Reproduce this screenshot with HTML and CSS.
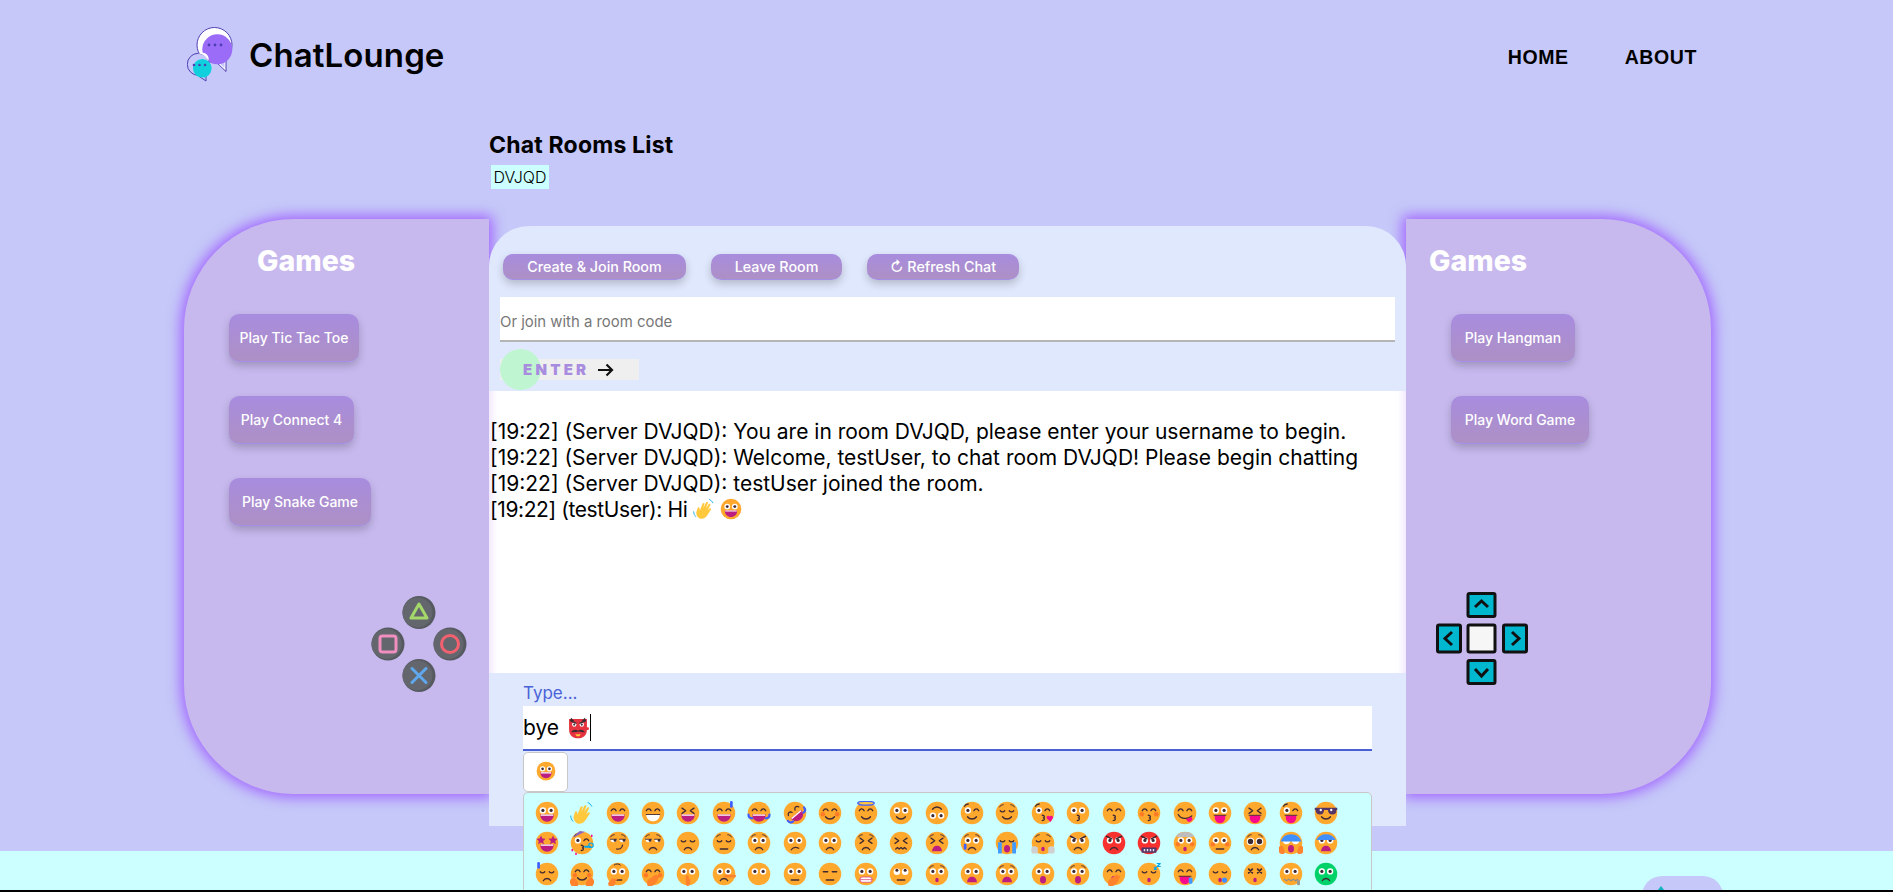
FILE: index.html
```html
<!DOCTYPE html>
<html lang="en">
<head>
  <meta charset="UTF-8">
  <meta name="viewport" content="width=device-width, initial-scale=1.0">
  <title>ChatLounge</title>
  <link rel="stylesheet" href="styles.css">
</head>
<body>
  <header class="site-header">
    <a class="brand" href="#">
      <svg class="brand-logo" viewBox="0 0 46 56" width="46" height="56">
        <path d="M28 34L39 44.500V28z" fill="#fff" stroke="#4f3fb5" stroke-width="1" stroke-linejoin="round"/>
        <circle cx="27.500" cy="18" r="17.500" fill="#fff" stroke="#4f3fb5" stroke-width="1"/>
        <path d="M32 36l5.500 5V33z" fill="#c5c8f8"/>
        <circle cx="30.300" cy="22.300" r="15" fill="#9b6cf7"/>
        <circle cx="22" cy="18" r="1.400" fill="#4f3fb5"/><circle cx="28" cy="18" r="1.400" fill="#4f3fb5"/><circle cx="34" cy="18" r="1.400" fill="#4f3fb5"/>
        <path d="M7 46l12 8V44z" fill="#c5c8f8" stroke="#4f3fb5" stroke-width="1" stroke-linejoin="round"/>
        <circle cx="11.300" cy="37.300" r="11" fill="#c5c8f8" stroke="#4f3fb5" stroke-width="1"/>
        <path d="M11 26.800c4 0 7.500 1.500 10.500 7.200c1-3.500-1-6-3-7.500c-2-1.300-5-.500-7.500.300z" fill="#fff"/>
        <path d="M16 48l2.500 3.500V47z" fill="#0fd0dc"/>
        <circle cx="15.300" cy="41.300" r="9.300" fill="#0fd0dc"/>
        <circle cx="7" cy="38" r="1.300" fill="#4f3fb5"/><circle cx="12.500" cy="38" r="1.300" fill="#4f3fb5"/><circle cx="18" cy="38" r="1.300" fill="#4f3fb5"/>
      </svg>
      <span class="brand-name">ChatLounge</span>
    </a>
    <nav class="site-nav">
      <a href="#">HOME</a>
      <a href="#">ABOUT</a>
    </nav>
  </header>

  <section class="rooms">
    <h2 class="rooms-title">Chat Rooms List</h2>
    <span class="room-code">DVJQD</span>
  </section>

  <main class="layout">
    <aside class="panel panel-left">
      <h2 class="panel-title">Games</h2>
      <button class="game-btn game-ttt">Play Tic Tac Toe</button>
      <button class="game-btn game-c4">Play Connect 4</button>
      <button class="game-btn game-snake">Play Snake Game</button>
      <svg class="pad-buttons" viewBox="0 0 96 96" width="96" height="96">
        <circle cx="48" cy="16.500" r="16.500" fill="#565a60"/>
        <circle cx="46.500" cy="16.500" r="15" fill="#63676d"/>
        <path d="M48 8l8 14H40z" fill="none" stroke="#a5d86a" stroke-width="3" stroke-linejoin="round"/>
        <circle cx="17" cy="48" r="16.500" fill="#565a60"/>
        <circle cx="15.500" cy="48" r="15" fill="#63676d"/>
        <rect x="9" y="40" width="16" height="16" rx="2.500" fill="none" stroke="#ef8fc0" stroke-width="3"/>
        <circle cx="79" cy="48" r="16.500" fill="#565a60"/>
        <circle cx="77.500" cy="48" r="15" fill="#63676d"/>
        <circle cx="79" cy="48" r="8.500" fill="none" stroke="#f3606f" stroke-width="3"/>
        <circle cx="48" cy="79.500" r="16.500" fill="#565a60"/>
        <circle cx="46.500" cy="79.500" r="15" fill="#63676d"/>
        <path d="M41 72.500l14 14M55 72.500l-14 14" stroke="#5fa8ee" stroke-width="3" stroke-linecap="round"/>
      </svg>
    </aside>

    <section class="chat">
      <div class="chat-actions">
        <button class="action-btn action-create">Create &amp; Join Room</button>
        <button class="action-btn action-leave">Leave Room</button>
        <button class="action-btn action-refresh">↻ Refresh Chat</button>
      </div>
      <input class="room-input" type="text" placeholder="Or join with a room code">
      <button class="enter-btn">
        <span class="enter-label">ENTER</span>
        <svg class="enter-arrow" viewBox="0 0 17 14" width="17" height="14">
          <path d="M1 7h14M9.500 1.500L15 7l-5.500 5.500" fill="none" stroke="#111" stroke-width="2.200"/>
        </svg>
      </button>

      <div class="messages">
        <p>[19:22] (Server DVJQD): You are in room DVJQD, please enter your username to begin.</p>
        <p>[19:22] (Server DVJQD): Welcome, testUser, to chat room DVJQD! Please begin chatting</p>
        <p>[19:22] (Server DVJQD): testUser joined the room.</p>
        <p class="message-user">[19:22] (testUser): Hi <span class="emoji emoji-chat" data-e="👋"></span> <span class="emoji emoji-chat" data-e="😃"></span></p>
      </div>

      <form class="composer">
        <label class="composer-label">Type...</label>
        <div class="composer-input">bye <span class="emoji emoji-input" data-e="👺"></span><span class="caret"></span></div>
        <button type="button" class="emoji-toggle"><span class="emoji emoji-small" data-e="😃"></span></button>
        <div class="emoji-picker" id="emoji-picker"></div>
      </form>
    </section>

    <aside class="panel panel-right">
      <h2 class="panel-title">Games</h2>
      <button class="game-btn game-hang">Play Hangman</button>
      <button class="game-btn game-word">Play Word Game</button>
      <svg class="pad-arrows" viewBox="0 0 92 93" width="92" height="93">
        <g fill="#00b7d0" stroke="#111" stroke-width="3">
          <rect x="32" y="1.500" width="27" height="23" rx="1.500"/>
          <rect x="1.500" y="33" width="23" height="27" rx="1.500"/>
          <rect x="32" y="33" width="27" height="27" rx="1.500" fill="#f6f6f6"/>
          <rect x="67.500" y="33" width="23" height="27" rx="1.500"/>
          <rect x="32" y="68.500" width="27" height="23" rx="1.500"/>
        </g>
        <path d="M39 15l6.500-6 6.500 6M16 40l-7 6.500 7 6.500M76 40l7 6.500-7 6.500M39 77l6.500 7 6.500-7" fill="none" stroke="#111" stroke-width="3"/>
      </svg>
    </aside>
  </main>

  <footer class="site-footer">
    <a class="to-top" href="#"><span class="to-top-arrow"></span></a>
  </footer>
  <div class="bottom-line"></div>

  <script src="script.js"></script>
</body>
</html>
```

FILE: styles.css
```css
* {
  box-sizing: border-box;
}

html, body {
  margin: 0;
  height: 892px;
  overflow: hidden;
}

body {
  font-family: Inter, "Open Sans", sans-serif;
  background-color: #c5c8f8;
  color: #000;
}

.site-header {
  height: 130px;
  display: flex;
  justify-content: space-between;
  align-items: flex-start;
  padding: 27px 196px 0 187px;
}

.brand {
  display: flex;
  align-items: center;
  gap: 16px;
  color: #000;
  text-decoration: none;
}

.brand-name {
  font-size: 33px;
  font-weight: 600;
  letter-spacing: 0.1px;
}

.site-nav {
  display: flex;
  gap: 56px;
  padding-top: 19px;
}

.site-nav a {
  font-family: "Liberation Sans", Arial, sans-serif;
  font-size: 19.500px;
  font-weight: 700;
  color: #000;
  text-decoration: none;
  letter-spacing: 0.6px;
}

.rooms {
  padding-left: 489px;
  height: 59px;
}

.rooms-title {
  margin: 0;
  height: 35px;
  line-height: 30px;
  font-size: 23px;
  font-weight: 700;
  letter-spacing: 0.2px;
}

.room-code {
  display: inline-block;
  margin-left: 2px;
  width: 58px;
  height: 24px;
  line-height: 24px;
  text-align: center;
  font-size: 16px;
  font-weight: 300;
  background-color: #ccffff;
}

.layout {
  display: flex;
  align-items: flex-start;
  margin-top: 30px;
  padding-left: 184px;
}

.panel {
  flex: none;
  width: 305px;
  height: 575px;
  display: flex;
  flex-direction: column;
  align-items: flex-start;
  background-color: #c7b9ee;
  box-shadow: 0 0 14px 3px #a060ff;
}

.panel-left {
  border-radius: 110px 0 0 110px;
  padding-left: 45px;
}

.panel-right {
  border-radius: 0 110px 110px 0;
  padding-left: 45px;
}

.panel-title {
  margin: 22px 0 0;
  height: 40px;
  line-height: 40px;
  font-size: 28.500px;
  font-weight: 800;
  color: #fff;
}

.panel-left .panel-title {
  margin-left: 28px;
}

.panel-right .panel-title {
  margin-left: -22px;
}

.game-btn {
  height: 48px;
  margin-top: 34px;
  padding: 0;
  border: none;
  border-bottom: 1px solid #a48fe8;
  border-radius: 10px;
  font-family: inherit;
  font-size: 14px;
  font-weight: 500;
  color: #fff;
  background: linear-gradient(#a88cdf, #ad90c4);
  box-shadow: 0 4px 8px rgba(0, 0, 0, 0.2);
  cursor: pointer;
}

.panel-title + .game-btn {
  margin-top: 33px;
}

.game-ttt { width: 130px; }
.game-c4 { width: 125px; }
.game-snake { width: 142px; }
.game-hang { width: 124px; }
.game-word { width: 138px; }

.pad-buttons {
  align-self: flex-end;
  margin: 70px 22px 0 0;
}

.pad-arrows {
  margin: 148px 0 0 -15px;
}

.chat {
  position: relative;
  z-index: 1;
  flex: none;
  width: 917px;
  height: 600px;
  margin-top: 7px;
  border-radius: 40px 40px 0 0;
  background-color: #e0e8fd;
}

.chat-actions {
  display: flex;
  gap: 25px;
  padding: 28px 0 0 14px;
}

.action-btn {
  height: 26px;
  padding: 0;
  border: none;
  border-bottom: 1px solid #a48fe8;
  border-radius: 10px;
  font-family: inherit;
  font-size: 14.300px;
  font-weight: 500;
  color: #fff;
  background: linear-gradient(#a88cdf, #ad90c4);
  box-shadow: 0 4px 8px rgba(0, 0, 0, 0.2);
  cursor: pointer;
}

.action-create { width: 183px; }
.action-leave { width: 131px; }
.action-refresh { width: 152px; }

.room-input {
  display: block;
  width: 895px;
  height: 45px;
  margin: 17px 0 0 11px;
  padding: 7px 0 0;
  border: none;
  border-bottom: 2px solid #b5b5b5;
  outline: none;
  font-family: inherit;
  font-size: 14.900px;
  background-color: #fff;
}

.room-input::placeholder {
  color: #777;
}

.enter-btn {
  position: relative;
  display: flex;
  align-items: center;
  width: 139px;
  height: 21px;
  margin: 17px 0 0 11px;
  padding: 0 0 0 23px;
  border: none;
  background-color: #efefef;
  font-family: inherit;
}

.enter-btn::before {
  content: "";
  position: absolute;
  left: 0;
  top: -10px;
  width: 41px;
  height: 41px;
  border-radius: 50%;
  background-color: #bff5d0;
}

.enter-label {
  position: relative;
  font-size: 15px;
  font-weight: 900;
  letter-spacing: 3.200px;
  color: #a88cdf;
}

.enter-arrow {
  position: relative;
  margin-left: 8px;
}

.messages {
  height: 282px;
  margin-top: 11px;
  padding: 28px 1px 0;
  background-color: #fff;
  box-shadow: inset 12px 0 10px -10px #ecdfff, inset -12px 0 10px -10px #ecdfff;
  font-size: 21px;
  line-height: 25.900px;
}

.messages p {
  margin: 0;
}

.messages .message-user {
  letter-spacing: -0.4px;
}

.composer {
  position: relative;
  padding: 8px 34px 0;
}

.composer-label {
  display: block;
  height: 25px;
  line-height: 24px;
  font-size: 17px;
  color: #4a62d8;
}

.composer-input {
  display: flex;
  align-items: center;
  height: 45px;
  border-bottom: 2px solid #4a5fd4;
  background-color: #fff;
  font-size: 21px;
  white-space: pre;
}

.caret {
  width: 1px;
  height: 27px;
  margin-left: 1px;
  background-color: #000;
}

.emoji-toggle {
  display: block;
  width: 45px;
  height: 40px;
  margin-top: 1px;
  padding: 0;
  border: 1px solid #c8c8c8;
  border-radius: 5px;
  background-color: #fff;
}

.emoji-picker {
  position: absolute;
  left: 34px;
  top: 119px;
  width: 849px;
  height: 140px;
  display: grid;
  grid-template-columns: repeat(23, 35.450px);
  grid-auto-rows: 30.300px;
  padding: 5px;
  border: 1px solid #c8c8c8;
  border-radius: 5px;
  background-color: #ccffff;
}

.emoji {
  display: inline-flex;
  vertical-align: middle;
}

.emoji svg {
  display: block;
  width: 100%;
  height: 100%;
}

.emoji-chat {
  width: 22px;
  height: 22px;
  margin-top: -3px;
}

.emoji-input {
  width: 22px;
  height: 22px;
  margin-left: 2px;
}

.emoji-small {
  width: 20px;
  height: 20px;
  margin-top: -2px;
}

.emoji-toggle .emoji {
  margin-left: auto;
  margin-right: auto;
}

.emoji-picker .emoji {
  width: 24px;
  height: 24px;
  margin: auto;
}

.site-footer {
  position: absolute;
  left: 0;
  right: 0;
  top: 851px;
  height: 41px;
  overflow: hidden;
  background-color: #ccffff;
}

.to-top {
  display: block;
  position: relative;
  width: 81px;
  height: 40px;
  margin: 25px 0 0 1642px;
  border-radius: 20px;
  background-color: #c5c8f8;
}

.to-top-arrow {
  position: absolute;
  left: 11px;
  top: 10px;
  border-left: 8px solid transparent;
  border-right: 8px solid transparent;
  border-bottom: 10px solid #16b4c0;
}

.bottom-line {
  position: fixed;
  z-index: 5;
  left: 0;
  right: 0;
  bottom: 0;
  height: 2px;
  background-color: #000;
}
```

FILE: script.js
```js
// emoji are drawn from parts, every face is "eyes mouth extras..."
const dark = '#402a32';

function line(d, color = dark, width = 1.7) {
  return `<path d="${d}" fill="none" stroke="${color}" stroke-width="${width}" stroke-linecap="round" stroke-linejoin="round"/>`;
}

function eyeball(x, y, r = 4.2, p = 2.1, dx = 0, dy = 0) {
  return `<circle cx="${x}" cy="${y}" r="${r}" fill="#fff"/><circle cx="${x + dx}" cy="${y + dy}" r="${p}" fill="${dark}"/>`;
}

function star(x, y) {
  return `<path transform="translate(${x} ${y})" d="M0-6l1.800 4 4.400.400-3.300 2.900 1 4.300L0 3.400l-3.900 2.200 1-4.300-3.300-2.900 4.400-.400z" fill="#bb1d80"/>`;
}

const eyes = {
  none: '',
  wide: eyeball(10.5, 12.5) + eyeball(21.5, 12.5),
  big: eyeball(10, 12, 5.5, 1.5) + eyeball(22, 12, 5.5, 1.5),
  puppy: eyeball(10, 14, 5, 3.6) + eyeball(22, 14, 5, 3.6) + line('M6 8c1-2 3-3 5-3M26 8c-1-2-3-3-5-3', dark, 1.3),
  roll: eyeball(10.5, 13, 4.4, 2, 0, -2) + eyeball(21.5, 13, 4.4, 2, 0, -2),
  happy: line('M7 13c1.500-3.500 5-3.500 6.500 0M18.500 13c1.500-3.500 5-3.500 6.500 0'),
  squint: line('M8 9.500l5 3.500-5 3.500M24 9.500l-5 3.500 5 3.500'),
  flat: line('M7 13h6M19 13h6'),
  down: line('M7 13c1.500 2 4.500 2 6 0M19 13c1.500 2 4.500 2 6 0'),
  wink: eyeball(10.5, 12.5) + line('M18.500 13c1.500-3.500 5-3.500 6.500 0M6 7c1-2 3-3 5-3'),
  side: `<path d="M6 11h8c0 3-1.500 4-4 4s-4-1-4-4zM18 11h8c0 3-1.500 4-4 4s-4-1-4-4z" fill="#fff"/><circle cx="12" cy="12.500" r="1.800" fill="${dark}"/><circle cx="24" cy="12.500" r="1.800" fill="${dark}"/>` + line('M6 11h8M18 11h8', dark, 1.2),
  cross: line('M7.500 9.500l5 5M12.500 9.500l-5 5M19.500 9.500l5 5M24.500 9.500l-5 5', dark, 2.2)
};

const mouths = {
  none: '',
  open: '<path d="M7 18h18c0 6-4 9.500-9 9.500S7 24 7 18z" fill="#bb1d80"/><path d="M8 18h16l.500 1.800H7.500z" fill="#fff"/>',
  grin: `<path d="M7 18h18c0 6-4 9-9 9s-9-3-9-9z" fill="#fff"/>` + line('M7 18h18', dark, 1.2),
  smile: line('M10 21c3 4 9 4 12 0'),
  smirk: line('M22 19c-.500 4-4 6-8 5'),
  frown: line('M11 25c2-4 8-4 10 0'),
  flat: line('M11 24h10'),
  skew: line('M11 25c2-3 6-4 10-2'),
  kiss: line('M15 19c3.500 0 3.500 3 1.500 3.500c2 .500 2 3.500-1.500 3.500'),
  oh: '<ellipse cx="16" cy="24" rx="2.300" ry="3" fill="#bb1d80"/>',
  ohbig: '<ellipse cx="16" cy="23.500" rx="4" ry="5" fill="#bb1d80"/>',
  fopen: '<path d="M9.500 27c0-5 3-7.500 6.500-7.500s6.500 2.500 6.500 7.500z" fill="#bb1d80"/>',
  tongue: '<path d="M9 19h14v3c0 4-3 7.500-7 7.500S9 26 9 22z" fill="#f70a8d"/>' + line('M8 19h16', dark, 1.2),
  yum: line('M7 18c3 6 12 7 18 2') + '<path d="M17 24c3-.500 6-2 7-3.500l2 3c0 3-4 5-6 4z" fill="#f70a8d"/>',
  wavy: line('M9 24l2.300-2 2.300 2 2.400-2 2.400 2 2.300-2 2.300 2'),
  teeth: '<rect x="8" y="20" width="16" height="7" rx="3" fill="#fff" stroke="#d6407e" stroke-width="1"/>' + line('M8 23.500h16', '#d6407e', 1),
  zip: line('M7 23l3 2 3-2 3 2 3-2 3 2 3-2', '#8f8f8f', 1.7) + '<rect x="24" y="24" width="4" height="7" rx="1.500" fill="#9a9a9a"/>',
  censor: '<rect x="6" y="22" width="20" height="7" rx="1" fill="#533566"/><path d="M9 24h2v3H9zM13 24h2v3h-2zM17 24h2v3h-2zM21 24h2v3h-2z" fill="#e8e0ef"/>'
};

const extras = {
  sweat: '<rect x="24" y="0" width="3.600" height="9" rx="1.800" fill="#3f5fff"/>',
  sweatl: '<rect x="3" y="0" width="3.600" height="9" rx="1.800" fill="#3f5fff"/>',
  tears: line('M2 18c0 3 2 5 5 5M30 18c0 3-2 5-5 5', '#3f5fff', 3),
  blush: '<circle cx="6.500" cy="17.500" r="3" fill="#ff6723" opacity=".7"/><circle cx="25.500" cy="17.500" r="3" fill="#ff6723" opacity=".7"/>',
  halo: '<ellipse cx="16" cy="3" rx="11" ry="2.500" fill="#ffc83d" stroke="#3f5fff" stroke-width="1.800"/>',
  heart: '<path d="M26 28l-5-5c-1.500-2.500 2-4.500 4-2.500c2-2 5.500 0 4 2.500z" fill="#f70a8d"/>',
  shades: '<path d="M1 9h30v3h-1c0 4-2 6-5.500 6S19 16 18.500 12h-5c-.500 4-2 6-5.500 6s-5.500-2-6-6H1z" fill="#533566"/><circle cx="9" cy="12" r="1.600" fill="#fff"/><circle cx="23" cy="12" r="1.600" fill="#fff"/>',
  stars: star(8, 12) + star(24, 12),
  party: '<path d="M3 9L13 0l7 1z" fill="#8d65c5"/>' + line('M20 21h7', '#00a6ed', 2.500) + '<circle cx="28" cy="19" r="3" fill="none" stroke="#00a6ed" stroke-width="1.500"/><path d="M2 24h2v3H2zM28 5h2v3h-2zM7 29h2v3H7z" fill="#f70a8d"/>',
  brows: line('M6 8c1-2 3-3 5-3M26 8c-1-2-3-3-5-3', dark, 1.3),
  angry: line('M6 7l7 3.500M26 7l-7 3.500', dark, 2),
  tear: '<rect x="5" y="17" width="3.600" height="8" rx="1.800" fill="#3f5fff"/>',
  sob: '<path d="M4 15h5v15H4zM23 15h5v15h-5z" fill="#3f9bff"/>',
  steam: '<path d="M1 22c3-3 6-1 8 0v8H2c-2-1-2-6-1-8zM31 22c-3-3-6-1-8 0v8h7c2-1 2-6 1-8z" fill="#d0d0d0"/>',
  blast: '<path d="M5 8c-1-4 4-5 6-6c3-1 8-1 11 0c3 1 6 3 5 6z" fill="#bdbdbd"/>',
  fear: '<path d="M3 12A15 15 0 0 1 29 12z" fill="#3f8fff"/>',
  scream: '<path d="M2 14A15 15 0 0 1 30 14z" fill="#3f8fff"/><path d="M0 22c0-3 5-3 6 0l2 7c-2 3-7 2-8-1zM32 22c0-3-5-3-6 0l-2 7c2 3 7 2 8-1z" fill="#ff822d"/>',
  hands: '<path d="M0 28c-1-4 2-7 4-7s5 2 6 5 2 5 0 6H2zM32 28c1-4-2-7-4-7s-5 2-6 5-2 5 0 6h8z" fill="#ff822d"/>',
  hand1: '<path d="M9 32c-2-4-1-8 3-10l7-5c2-1 3 1 2 2l3-1c1 1 0 3-1 3l-1 4c-2 4-6 6-9 8z" fill="#ff822d"/>',
  thumb: '<path d="M4 32c-2-3-1-6 2-7l3-4 1 2 5-1c1 2-1 3-2 3l-1 5c-2 3-6 3-8 2z" fill="#ff822d"/>' + line('M11 4c2-2 6-2 8 0', dark, 1.3),
  finger: '<path d="M13 19c0-2 4-2 4 0v3l2 1v5c0 3-2 4-3.500 4S13 30 13 27z" fill="#ff822d"/>',
  nose: '<rect x="16" y="17" width="16" height="3.600" rx="1.800" fill="#ff822d"/>',
  zzz: line('M23 7h3l-3 3h3M27 2h4l-4 4h4', '#00a6ed', 1.6),
  drool: '<path d="M21 21h5v6c0 3-5 3-5 0z" fill="#3f9bff"/>',
  snot: '<circle cx="22" cy="24" r="3.500" fill="#3f8fff"/>'
};

const faces = {
  '😃': 'wide open', '😄': 'happy open', '😁': 'happy grin', '😆': 'squint open', '😅': 'happy open sweat',
  '😂': 'happy open tears', '🤣': 'happy open tears tilt', '😊': 'happy smile blush', '😇': 'happy smile halo',
  '🙂': 'wide smile', '🙃': 'wide smile flip', '😉': 'wink smile', '😌': 'down smile brows', '😘': 'wink kiss heart',
  '😗': 'wide kiss', '😙': 'happy kiss', '😚': 'happy kiss blush', '😋': 'happy yum', '😛': 'wide tongue',
  '😝': 'squint tongue', '😜': 'wink tongue', '😎': 'none smile shades',
  '🤩': 'none open stars', '🥳': 'wink kiss party', '😏': 'side smirk brows', '😒': 'side frown brows', '😞': 'down frown',
  '😔': 'down flat brows', '😟': 'wide frown brows', '😕': 'wide skew', '🙁': 'wide frown', '😣': 'squint frown brows',
  '😖': 'squint wavy', '😫': 'squint fopen brows', '😢': 'wide frown brows tear', '😭': 'down ohbig sob', '😤': 'down oh brows steam',
  '😠': 'wide frown angry', '😡': 'wide frown angry red', '🤬': 'wide censor angry red', '🤯': 'wide oh blast blush',
  '😳': 'wide flat blush', '🥺': 'puppy frown', '😱': 'big ohbig scream', '😨': 'wide fopen fear',
  '😓': 'down frown sweatl', '🤗': 'happy smile hands blush', '🤔': 'wide flat thumb', '🤭': 'happy none hand1 blush',
  '🤫': 'wide none finger', '🤥': 'wide frown nose', '😶': 'wide none', '😐': 'wide flat', '😑': 'flat flat',
  '😬': 'wide teeth', '🙄': 'roll flat', '😯': 'wide oh brows', '😦': 'wide fopen', '😧': 'wide fopen brows',
  '😮': 'wide ohbig', '😲': 'wide ohbig brows', '🥱': 'happy ohbig hand1', '😴': 'down oh zzz', '🤤': 'happy tongue drool',
  '😪': 'down oh snot', '😵': 'cross oh', '🤐': 'wide zip', '🤢': 'wide frown green'
};

const special = {
  '👋': '<path d="M10 30c-4-2-6-7-5-10l2-6c1-1 2.500 0 2.500 1l.500 3 4-10c1-1.500 3-1 2.800.500l-1.800 6 4-8c1-1.500 3-1 2.800.500l-3 8 4-6c1-1 3-.500 2.500 1l-4 8 3-3c1-.500 2.500 .500 2 1.500l-5 8c-3 5-8 7-12 5z" fill="#ffc83d"/>' +
    line('M1 20c0 3 1 5 3 7M24 2c2 1 4 3 5 5', '#00a6ed', 1.2),
  '👺': '<path d="M3 3h26v15c0 8-5 13-13 13S3 26 3 18z" fill="#e5343f"/><path d="M6 1l5 5H4zM26 1l-5 5h7z" fill="#402a32"/>' +
    eyeball(10.5, 11, 3.2, 1.6) + eyeball(21.500, 11, 3.2, 1.6) +
    line('M6 6l7 3M26 6l-7 3', dark, 2) +
    '<rect x="14" y="15" width="18" height="4" rx="2" fill="#e5343f"/><path d="M6 22c3-4 7-4 10-2c3-2 7-2 10 2c-4 0-7 0-10-1c-3 1-6 1-10 1z" fill="#402a32"/><path d="M12 25h8l-2 3h-4z" fill="#ffc83d"/>'
};

function drawEmoji(char) {
  const view = 'xmlns="http://www.w3.org/2000/svg" viewBox="0 0 32 32"';
  if (special[char]) return `<svg ${view}>${special[char]}</svg>`;

  const [eye, mouth, ...rest] = faces[char].split(' ');
  let skin = '#ffa82e';
  if (rest.includes('red')) skin = '#f8312f';
  if (rest.includes('green')) skin = '#00d26a';

  const parts = rest.map((name) => extras[name] || '').join('');
  let turn = '';
  if (rest.includes('tilt')) turn = 'transform="rotate(-40 16 16)"';
  if (rest.includes('flip')) turn = 'transform="rotate(180 16 16)"';

  return `<svg ${view}><circle cx="16" cy="16" r="15" fill="${skin}"/><g ${turn}>${eyes[eye]}${mouths[mouth]}${parts}</g></svg>`;
}

const pickerList = '😃👋😄😁😆😅😂🤣😊😇🙂🙃😉😌😘😗😙😚😋😛😝😜😎' +
  '🤩🥳😏😒😞😔😟😕🙁😣😖😫😢😭😤😠😡🤬🤯😳🥺😱😨' +
  '😓🤗🤔🤭🤫🤥😶😐😑😬🙄😯😦😧😮😲🥱😴🤤😪😵🤐🤢';

const picker = document.getElementById('emoji-picker');
Array.from(pickerList).forEach((char) => {
  const item = document.createElement('span');
  item.className = 'emoji';
  item.dataset.e = char;
  picker.appendChild(item);
});

document.querySelectorAll('.emoji').forEach((el) => {
  el.innerHTML = drawEmoji(el.dataset.e);
});
```
